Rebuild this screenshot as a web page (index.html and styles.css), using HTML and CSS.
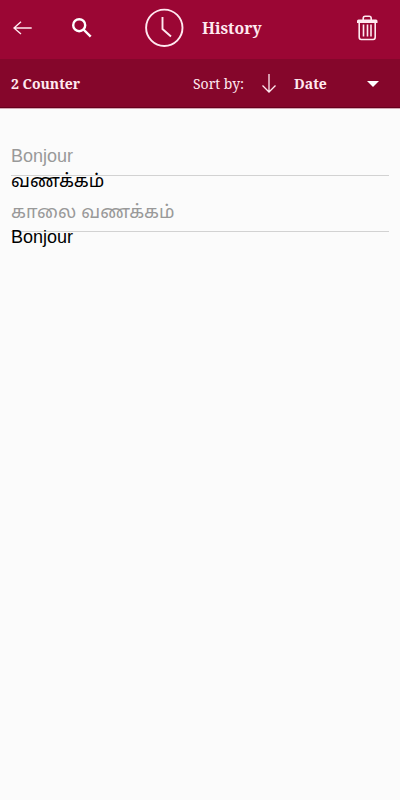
FILE: index.html
```html
<!DOCTYPE html>
<html lang="en">
<head>
<meta charset="utf-8">
<meta name="viewport" content="width=device-width, initial-scale=1">
<title>History</title>
<link rel="stylesheet" href="styles.css">
</head>
<body>
<header class="topbar">
  <svg class="back" width="20" height="14" viewBox="0 0 20 14"><path d="M18.700 7H1M8 .8L1 7l7 6"/></svg>
  <svg class="search" width="20" height="20" viewBox="0 0 20 20"><circle cx="7.200" cy="7.200" r="6"/><path d="M11.500 11.500L18.700 18.700"/></svg>
  <svg class="clock" width="40" height="40" viewBox="0 0 40 40"><circle cx="20.300" cy="19.800" r="18.200"/><path d="M18.500 9V21L27 28.500"/></svg>
  <h1 class="title">History</h1>
  <svg class="trash" width="22" height="26" viewBox="0 0 22 26"><path d="M7.200 5V3.500Q7.200 1.300 9.200 1.300h4q2 0 2 2.200V5"/><path class="lid" d="M1 8V6q0-1.500 1.500-1.500h17.500Q21.500 4.500 21.500 6v2z"/><path d="M3.200 7.500V22q0 2.500 2 2.500h12q2 0 2-2.500V7.500"/><path class="slats" d="M7.500 9.500v12M11.500 9.500v12M15 9.500v12"/></svg>
</header>
<div class="sortbar">
  <strong class="count">2 Counter</strong>
  <span class="label">Sort by:</span>
  <svg class="down" width="16" height="21" viewBox="0 0 16 21"><path d="M8 1v18M1.500 12.500L8 19l6.500-6.500"/></svg>
  <strong class="field">Date</strong>
  <svg class="caret" width="12" height="6" viewBox="0 0 12 6"><path d="M0 0h12L6 6z"/></svg>
</div>
<main class="history">
  <article class="entry">
    <div class="source">Bonjour</div>
    <div class="result tamil" lang="ta">வணக்கம்</div>
  </article>
  <article class="entry">
    <div class="source tamil" lang="ta">காலை வணக்கம்</div>
    <div class="result">Bonjour</div>
  </article>
</main>
</body>
</html>
```
FILE: styles.css
```css
* { box-sizing: border-box; }
body {
  margin: 0;
  min-height: 100vh;
  background: #fbfbfb;
  color: #000;
  font-family: "Liberation Sans", "Noto Sans Tamil", sans-serif;
}
svg { display: block; flex: none; fill: none; stroke: #ffe9f0; }
.topbar, .sortbar {
  display: flex;
  align-items: center;
  color: #ffe9f0;
  font-family: "Noto Serif", "Droid Serif", "DejaVu Serif Condensed", "DejaVu Serif", serif;
  white-space: nowrap;
}
.topbar { height: 59px; background: #9b0634; padding: 0 22px 3px 13px; }
.back { stroke-width: 1.4; }
.search { margin-left: 39px; stroke-width: 2.4; stroke: #fff; }
.clock { margin-left: 52px; stroke-width: 1.9; }
.title { margin: 0 0 0 18px; font-size: 15.8px; line-height: 22px; width: 60px; }
.trash { margin-left: auto; stroke-width: 1.6; }
.lid { fill: #ffe9f0; stroke: none; }
.slats { stroke-width: 1.6; }
.sortbar {
  height: 49px;
  padding: 0 21px 0 11px;
  background: #85062b;
  border-bottom: 1px solid #65001d;
  box-shadow: 0 1px 0 #d5a6b4;
  font-size: 14px;
}
.count { width: 182px; }
.label { width: 68px; }
.down { stroke-width: 1.3; }
.field { margin-left: 17px; }
.caret { margin: 2px 0 0 auto; fill: #fff; stroke: none; }
.history { padding: 39px 11px 0; font-size: 18px; }
.entry { height: 56px; line-height: 18px; }
.source { height: 29px; color: #999; border-bottom: 1px solid #d2d2d2; }
.result { margin-top: -4px; }
.tamil { font-size: 18.1px; }
```
